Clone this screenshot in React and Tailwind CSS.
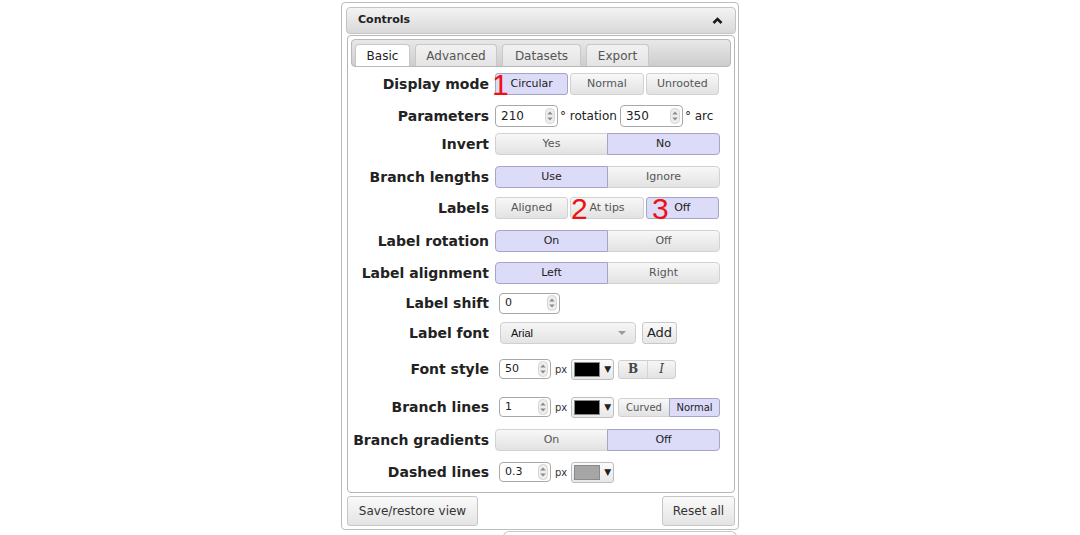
import React from "react";

const SEL = "bg-[#dcdcf9] border-[#a5a5c6] text-[#222]";
const UNSEL = "bg-linear-to-b from-[#f8f8f8] to-[#e2e2e2] border-[#d2d2d2] text-[#555]";

function Spinner() {
  return (
    <svg width="10" height="16" viewBox="0 0 10 16" className="shrink-0">
      <rect x="0.5" y="0.5" width="9" height="15" rx="4" fill="#ededed" stroke="#d6d6d6" />
      <path d="M2.3 6.6 L5 3.4 L7.7 6.6Z" fill="#8a8a8a" />
      <path d="M2.3 9.4 L5 12.6 L7.7 9.4Z" fill="#8a8a8a" />
    </svg>
  );
}

function Num({ value, big }) {
  return (
    <div
      className={
        big
          ? "flex h-[22px] w-[63px] items-center justify-between rounded-[4px] border border-[#a8a8a8] bg-white pl-[5px] pr-[2px] text-[12px] text-[#222]"
          : "flex h-[20px] w-[52px] items-center justify-between rounded-[4px] border border-[#a8a8a8] bg-white pl-[5px] pr-[2px] text-[11px] text-[#222]"
      }
    >
      <span>{value}</span>
      <Spinner />
    </div>
  );
}

function Seg3({ items, sel, marks }) {
  return (
    <div className="relative flex h-[22px] w-[224px] gap-[2px]">
      {items.map((t, i) => (
        <div
          key={t}
          className={`flex flex-1 items-center justify-center rounded-[3px] border text-[11px] ${i === sel ? SEL : UNSEL}`}
        >
          {t}
        </div>
      ))}
      {marks}
    </div>
  );
}

function Seg2({ items, sel }) {
  return (
    <div className="flex h-[22px] w-[225px]">
      {items.map((t, i) => (
        <div
          key={t}
          className={`flex flex-1 items-center justify-center border text-[11px] ${i === 0 ? "rounded-l-[4px]" : "-ml-px rounded-r-[4px]"} ${i === sel ? SEL + " relative" : UNSEL}`}
        >
          {t}
        </div>
      ))}
    </div>
  );
}

function ColorBtn({ color }) {
  return (
    <div className="flex h-[21px] w-[43px] items-center rounded-[3px] border border-[#bdbdbd] bg-linear-to-b from-[#fbfbfb] to-[#e8e8e8] pl-[2px]">
      <div className={`h-[15px] w-[26px] border border-[#8a8a8a] ${color}`} />
      <span className="ml-[4px] text-[9px] leading-none text-[#222]">▼</span>
    </div>
  );
}

function Row({ label, mt, children }) {
  return (
    <div className={`flex h-[22px] items-center ${mt}`}>
      <div className="w-[138px] text-right text-[14px] font-bold text-[#222]">{label}</div>
      <div className="ml-[6px] flex items-center">{children}</div>
    </div>
  );
}

const Mark = ({ n, cls }) => (
  <span
    className={`pointer-events-none absolute top-[-3px] font-['Liberation_Sans',Arial,sans-serif] text-[30px] leading-[30px] text-[#f01010] ${cls}`}
  >
    {n}
  </span>
);

export default function App() {
  return (
    <div className="h-[535px] w-[1080px] overflow-hidden bg-white font-['DejaVu_Sans',Verdana,sans-serif]">
      <div className="ml-[341px] mt-[2px] w-[398px] rounded-[4px] border border-[#bdbdbd] pb-[3px] pl-[4px] pr-[2px] pt-[4px]">
        {/* header */}
        <div className="flex h-[27px] items-center justify-between rounded-[4px] border border-[#c4c4c4] bg-linear-to-b from-[#f4f4f4] to-[#d8d8d8] pl-[11px] pr-[12px]">
          <span className="text-[11px] font-bold text-[#222]">Controls</span>
          <svg width="11" height="7" viewBox="0 0 11 7">
            <path d="M1.5 6 L5.5 2 L9.5 6" fill="none" stroke="#1a1a1a" strokeWidth="2.6" />
          </svg>
        </div>

        {/* content */}
        <div className="mx-[1px] mt-[1px] rounded-[4px] border border-[#b6b6b6] px-[3px] pb-[9px] pt-[3px]">
          {/* tabs */}
          <div className="flex h-[28px] items-end gap-[5px] rounded-[4px] border border-[#b8b8b8] bg-linear-to-b from-[#e8e8e8] to-[#cdcdcd] pl-[3px] text-[12px]">
            <div className="flex h-[22px] w-[55px] items-center justify-center rounded-t-[4px] border border-b-0 border-[#c8c8c8] bg-white text-[#222]">
              Basic
            </div>
            <div className="flex h-[22px] w-[82px] items-center justify-center rounded-t-[4px] border border-b-0 border-[#c8c8c8] bg-linear-to-b from-[#f2f2f2] to-[#e4e4e4] text-[#555]">
              Advanced
            </div>
            <div className="flex h-[22px] w-[79px] items-center justify-center rounded-t-[4px] border border-b-0 border-[#c8c8c8] bg-linear-to-b from-[#f2f2f2] to-[#e4e4e4] text-[#555]">
              Datasets
            </div>
            <div className="flex h-[22px] w-[63px] items-center justify-center rounded-t-[4px] border border-b-0 border-[#c8c8c8] bg-linear-to-b from-[#f2f2f2] to-[#e4e4e4] text-[#555]">
              Export
            </div>
          </div>

          <Row label="Display mode" mt="mt-[6px]">
            <Seg3 items={["Circular", "Normal", "Unrooted"]} sel={0} marks={<Mark n="1" cls="left-[-3px]" />} />
          </Row>
          <Row label="Parameters" mt="mt-[10px]">
            <Num value="210" big />
            <span className="ml-[2px] text-[12px] text-[#222]">° rotation</span>
            <span className="ml-[3px]" />
            <Num value="350" big />
            <span className="ml-[2px] text-[12px] text-[#222]">° arc</span>
          </Row>
          <Row label="Invert" mt="mt-[6px]">
            <Seg2 items={["Yes", "No"]} sel={1} />
          </Row>
          <Row label="Branch lengths" mt="mt-[11px]">
            <Seg2 items={["Use", "Ignore"]} sel={0} />
          </Row>
          <Row label="Labels" mt="mt-[9px]">
            <Seg3
              items={["Aligned", "At tips", "Off"]}
              sel={2}
              marks={
                <>
                  <Mark n="2" cls="left-[76px]" />
                  <Mark n="3" cls="left-[157px]" />
                </>
              }
            />
          </Row>
          <Row label="Label rotation" mt="mt-[11px]">
            <Seg2 items={["On", "Off"]} sel={0} />
          </Row>
          <Row label="Label alignment" mt="mt-[10px]">
            <Seg2 items={["Left", "Right"]} sel={0} />
          </Row>
          <Row label="Label shift" mt="mt-[8px]">
            <div className="ml-[4px] flex h-[21px] w-[61px] items-center justify-between rounded-[4px] border border-[#a8a8a8] bg-white pl-[5px] pr-[2px] text-[11px] text-[#222]">
              <span>0</span>
              <Spinner />
            </div>
          </Row>
          <Row label="Label font" mt="mt-[8px]">
            <div className="ml-[5px] flex h-[22px] w-[136px] items-center justify-between rounded-[4px] border border-[#d0d0d0] bg-linear-to-b from-[#f6f6f6] to-[#e4e4e4] pl-[10px] pr-[9px] font-['Liberation_Sans',Arial,sans-serif] text-[11px] text-[#111]">
              <span>Arial</span>
              <svg width="8" height="4" viewBox="0 0 8 4">
                <path d="M0 0 L8 0 L4 4Z" fill="#9a9a9a" />
              </svg>
            </div>
            <div className="ml-[6px] flex h-[22px] w-[35px] items-center justify-center rounded-[3px] border border-[#c8c8c8] bg-linear-to-b from-[#fafafa] to-[#e6e6e6] text-[13px] text-[#222]">
              Add
            </div>
          </Row>
          <Row label="Font style" mt="mt-[14px]">
            <div className="ml-[4px]">
              <Num value="50" />
            </div>
            <span className="ml-[4px] text-[10px] text-[#333]">px</span>
            <div className="ml-[4px]">
              <ColorBtn color="bg-black" />
            </div>
            <div className="ml-[4px] flex h-[19px] w-[58px] rounded-[3px] border border-[#cfcfcf] bg-linear-to-b from-[#f6f6f6] to-[#e3e3e3] font-['DejaVu_Serif',serif] text-[12px] text-[#444]">
              <div className="flex flex-1 items-center justify-center border-r border-[#d4d4d4] font-bold">B</div>
              <div className="flex flex-1 items-center justify-center italic">I</div>
            </div>
          </Row>
          <Row label="Branch lines" mt="mt-[16px]">
            <div className="ml-[4px]">
              <Num value="1" />
            </div>
            <span className="ml-[4px] text-[10px] text-[#333]">px</span>
            <div className="ml-[4px]">
              <ColorBtn color="bg-black" />
            </div>
            <div className="ml-[4px] flex h-[19px] w-[102px] text-[10px]">
              <div className={`flex flex-1 items-center justify-center rounded-l-[3px] border ${UNSEL}`}>Curved</div>
              <div className={`-ml-px flex flex-1 items-center justify-center rounded-r-[3px] border ${SEL}`}>Normal</div>
            </div>
          </Row>
          <Row label="Branch gradients" mt="mt-[11px]">
            <Seg2 items={["On", "Off"]} sel={1} />
          </Row>
          <Row label="Dashed lines" mt="mt-[10px]">
            <div className="ml-[4px]">
              <Num value="0.3" />
            </div>
            <span className="ml-[4px] text-[10px] text-[#333]">px</span>
            <div className="ml-[4px]">
              <ColorBtn color="bg-[#a6a6a6]" />
            </div>
          </Row>
        </div>

        {/* bottom buttons */}
        <div className="mx-[1px] mt-[3px] flex justify-between">
          <div className="flex h-[30px] w-[131px] items-center justify-center rounded-[3px] border border-[#c6c6c6] bg-linear-to-b from-[#fafafa] to-[#e4e4e4] text-[12px] text-[#333]">
            Save/restore view
          </div>
          <div className="flex h-[30px] w-[73px] items-center justify-center rounded-[3px] border border-[#c6c6c6] bg-linear-to-b from-[#fafafa] to-[#e4e4e4] text-[12px] text-[#333]">
            Reset all
          </div>
        </div>
      </div>
      <div className="ml-[503px] mt-[1px] h-[10px] w-[234px] rounded-t-[6px] border border-b-0 border-[#c8c8c8]" />
    </div>
  );
}
